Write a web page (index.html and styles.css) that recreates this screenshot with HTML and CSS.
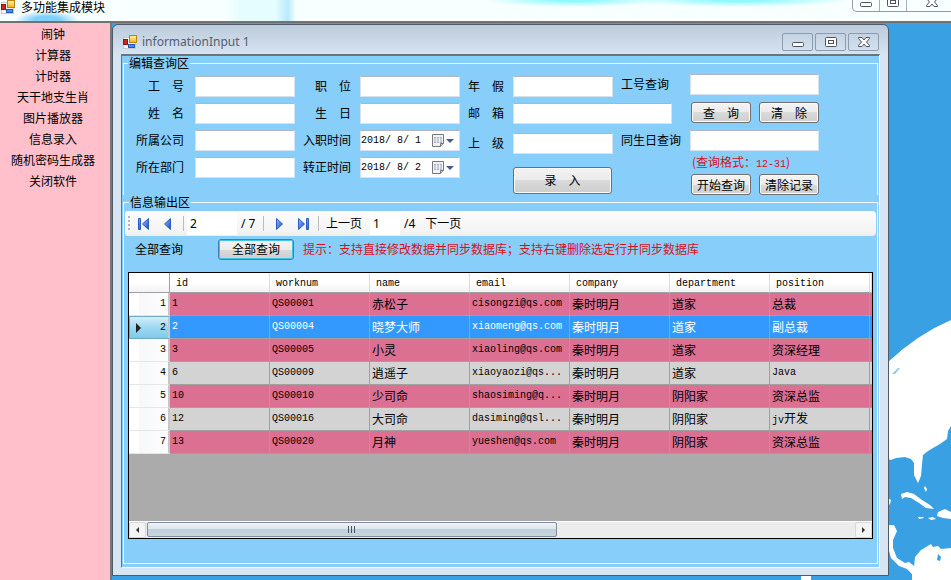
FILE: index.html
```html
<!DOCTYPE html>
<html lang="zh-CN">
<head>
<meta charset="utf-8">
<title>多功能集成模块</title>
<link rel="stylesheet" href="styles.css">
</head>
<body>
<svg class="defs" width="0" height="0" aria-hidden="true">
  <defs>
    <linearGradient id="gy" x1="0" y1="0" x2="0" y2="1"><stop offset="0" stop-color="#fff3a8"/><stop offset="1" stop-color="#f2b21c"/></linearGradient>
    <linearGradient id="gb" x1="0" y1="0" x2="1" y2="1"><stop offset="0" stop-color="#8fc0ff"/><stop offset="1" stop-color="#1a48b8"/></linearGradient>
    <symbol id="app" viewBox="0 0 14 14">
      <rect x="0.5" y="2.5" width="12" height="11" fill="#f4f4f4" stroke="#c8c8c8"/>
      <rect x="0.5" y="4.5" width="4" height="5" fill="#c8281e" stroke="#8e1710"/>
      <rect x="6.5" y="0.5" width="7" height="7" fill="url(#gy)" stroke="#b8860b"/>
      <rect x="5.5" y="9.5" width="6" height="3" fill="#4b8ae8" stroke="#2458b4"/>
    </symbol>
    <symbol id="min" viewBox="0 0 14 12"><rect x="1.5" y="6.5" width="11" height="4" rx="1" fill="#fff" stroke="#4b525c"/></symbol>
    <symbol id="max" viewBox="0 0 14 12"><rect x="1.5" y="1.5" width="11" height="9" rx="1" fill="#fff" stroke="#4b525c"/><rect x="4.5" y="4.5" width="5" height="3" fill="#fff" stroke="#4b525c"/></symbol>
    <symbol id="cls" viewBox="0 0 14 12"><path d="M1.500 1.500h3.500l2 2.500 2-2.500h3.500v1l-3 3.500 3 3.500v1H9L7 8l-2 2.500H1.500v-1l3-3.500-3-3.500z" fill="#fff" stroke="#4b525c"/></symbol>
    <symbol id="cal" viewBox="0 0 12 13"><path d="M0.5 0.5h11v9l-3 3h-8z" fill="#f2f2f2" stroke="#777"/><path d="M2 3h8v6H2z" fill="#a9b3c6"/><path d="M2 5h8M2 7h8M4.500 3v6M7.500 3v6" stroke="#fff" stroke-width=".7"/><path d="M8.500 12.500v-3h3" fill="#ccc" stroke="#777"/></symbol>
  </defs>
</svg>

<header class="titlebar">
  <svg class="app-icon" width="14" height="14"><use href="#app"/></svg>
  <h1>多功能集成模块</h1>
  <div class="main-controls">
    <button type="button" aria-label="最小化"><svg width="14" height="12"><use href="#min"/></svg></button>
    <button type="button" aria-label="最大化"><svg width="14" height="12"><use href="#max"/></svg></button>
    <button type="button" class="wide" aria-label="关闭"><svg width="14" height="12"><use href="#cls"/></svg></button>
  </div>
</header>

<div class="shell">
  <nav class="menu">
    <a href="#">闹钟</a>
    <a href="#">计算器</a>
    <a href="#">计时器</a>
    <a href="#">天干地支生肖</a>
    <a href="#">图片播放器</a>
    <a href="#">信息录入</a>
    <a href="#">随机密码生成器</a>
    <a href="#">关闭软件</a>
  </nav>

  <main class="desktop">
    <svg class="globe" viewBox="0 0 63 557" width="63" height="557" aria-hidden="true">
      <g transform="translate(0 190)">
        <path fill="#fff" d="M0 149Q30 121 63 107V213L60 218 59 226 52 231 45 235 40 238 35 242 34 251 33 263 30 270 26 262 26 250 23 246 17 244 8 245 3 247 0 246z"/>
        <path fill="#8fc8ef" d="M4 161l6-6 2 0-5 6z"/>
        <path fill="#fff" d="M13 281l6-2 7 2 8 6 8 5 4 4-8-1-7-5-8-5-6-1-3 2zM37 273l2 3-1 3-2-4zM30 304h5l1 1-5 1zM40 305l5-1 3 2-5 1zM50 299l7-3 6 3v7l-8-1-6-2zM0 285l3 2-1 4-2 2zM0 312l6 0 3 6-4 9 0 8 4 10 8 5 4-1 5 4 4 9V367H24l0-6-5-5-8-3-8-8-3-11z"/>
        <path fill="#fff" d="M26 354l1-10 6-7 10-6 2 3 5-1 3 3 10-1V367H26z"/>
        <path fill="#3aa0e4" d="M50 341l3 3-1 4-3-1z"/>
      </g>
    </svg>
    <i class="ice"></i>

    <section class="window">
      <header class="win-title">
        <svg class="app-icon" width="14" height="14"><use href="#app"/></svg>
        <h2>informationInput 1</h2>
        <div class="win-controls">
          <button type="button" aria-label="最小化"><svg width="14" height="12"><use href="#min"/></svg></button>
          <button type="button" aria-label="最大化"><svg width="14" height="12"><use href="#max"/></svg></button>
          <button type="button" aria-label="关闭"><svg width="14" height="12"><use href="#cls"/></svg></button>
        </div>
      </header>

      <div class="client">
        <fieldset class="group edit">
          <legend>编辑查询区</legend>
          <form class="form">
            <div class="col first">
              <label for="no">工　号</label><input id="no" type="text">
              <label for="nm">姓　名</label><input id="nm" type="text">
              <label for="co">所属公司</label><input id="co" type="text">
              <label for="dp">所在部门</label><input id="dp" type="text">
            </div>
            <div class="col second">
              <label for="ps">职　位</label><input id="ps" type="text">
              <label for="bd">生　日</label><input id="bd" type="text">
              <label for="d1">入职时间</label>
              <span class="date"><input id="d1" type="text" value="2018/ 8/ 1"><button type="button" aria-label="选择入职时间"><svg width="12" height="13"><use href="#cal"/></svg><i></i></button></span>
              <label for="d2">转正时间</label>
              <span class="date"><input id="d2" type="text" value="2018/ 8/ 2"><button type="button" aria-label="选择转正时间"><svg width="12" height="13"><use href="#cal"/></svg><i></i></button></span>
            </div>
            <div class="col third">
              <label for="hl">年　假</label><input id="hl" type="text">
              <label for="em">邮　箱</label><input id="em" class="long" type="text">
              <label for="up">上　级</label><input id="up" type="text">
              <button type="button" class="btn enter">录　入</button>
            </div>
            <div class="col query">
              <label for="q1">工号查询</label><input id="q1" type="text">
              <div class="pair"><button type="button" class="btn">查　询</button><button type="button" class="btn">清　除</button></div>
              <label for="q2">同生日查询</label><input id="q2" type="text">
              <p class="format">(查询格式：<span class="mono">12-31</span>)</p>
              <div class="pair"><button type="button" class="btn">开始查询</button><button type="button" class="btn">清除记录</button></div>
            </div>
          </form>
        </fieldset>

        <fieldset class="group output">
          <legend>信息输出区</legend>
          <div class="toolbar">
            <i class="grip"></i>
            <button type="button" aria-label="首条"><svg width="12" height="12" viewBox="0 0 12 12"><path d="M0.500 0.500h2v11h-2z" fill="url(#gb)" stroke="#2c5cc4"/><path d="M10.500 0.500v11L4.500 6z" fill="url(#gb)" stroke="#2c5cc4"/></svg></button>
            <button type="button" aria-label="上一条"><svg width="12" height="12" viewBox="0 0 12 12"><path d="M8.500 0.500v11L2.500 6z" fill="url(#gb)" stroke="#2c5cc4"/></svg></button>
            <i class="sep"></i>
            <input class="rec" type="text" value="2" aria-label="当前记录">
            <span class="total">/ 7</span>
            <i class="sep"></i>
            <button type="button" aria-label="下一条"><svg width="12" height="12" viewBox="0 0 12 12"><path d="M3.500 0.500v11l6-5.500z" fill="url(#gb)" stroke="#2c5cc4"/></svg></button>
            <button type="button" aria-label="末条"><svg width="12" height="12" viewBox="0 0 12 12"><path d="M9.500 0.500h2v11h-2z" fill="url(#gb)" stroke="#2c5cc4"/><path d="M1.500 0.500v11l6-5.500z" fill="url(#gb)" stroke="#2c5cc4"/></svg></button>
            <i class="sep"></i>
            <button type="button" class="page">上一页</button>
            <input class="pg" type="text" value="1" aria-label="当前页">
            <span class="pages">/4</span>
            <button type="button" class="page">下一页</button>
          </div>
          <div class="all">
            <span class="all-label">全部查询</span>
            <button type="button" class="btn focus">全部查询</button>
            <p>提示：支持直接修改数据并同步数据库；支持右键删除选定行并同步数据库</p>
          </div>
          <div class="grid">
            <table>
              <colgroup><col class="c-head"><col class="c"><col class="c"><col class="c"><col class="c"><col class="c"><col class="c"><col class="c"><col></colgroup>
              <thead><tr><th></th><th>id</th><th>worknum</th><th>name</th><th>email</th><th>company</th><th>department</th><th>position</th><th></th></tr></thead>
              <tbody>
                <tr><th>1</th><td class="mono">1</td><td class="mono">QS00001</td><td>赤松子</td><td class="mono">cisongzi@qs.com</td><td>秦时明月</td><td>道家</td><td>总裁</td><td></td></tr>
                <tr class="selected"><th>2</th><td class="mono">2</td><td class="mono">QS00004</td><td>晓梦大师</td><td class="mono">xiaomeng@qs.com</td><td>秦时明月</td><td>道家</td><td>副总裁</td><td></td></tr>
                <tr><th>3</th><td class="mono">3</td><td class="mono">QS00005</td><td>小灵</td><td class="mono">xiaoling@qs.com</td><td>秦时明月</td><td>道家</td><td>资深经理</td><td></td></tr>
                <tr><th>4</th><td class="mono">6</td><td class="mono">QS00009</td><td>逍遥子</td><td class="mono">xiaoyaozi@qs...</td><td>秦时明月</td><td>道家</td><td class="mono">Java</td><td></td></tr>
                <tr><th>5</th><td class="mono">10</td><td class="mono">QS00010</td><td>少司命</td><td class="mono">shaosiming@q...</td><td>秦时明月</td><td>阴阳家</td><td>资深总监</td><td></td></tr>
                <tr><th>6</th><td class="mono">12</td><td class="mono">QS00016</td><td>大司命</td><td class="mono">dasiming@qsl...</td><td>秦时明月</td><td>阴阳家</td><td><span class="mono">jv</span>开发</td><td></td></tr>
                <tr><th>7</th><td class="mono">13</td><td class="mono">QS00020</td><td>月神</td><td class="mono">yueshen@qs.com</td><td>秦时明月</td><td>阴阳家</td><td>资深总监</td><td></td></tr>
              </tbody>
            </table>
            <div class="scroll">
              <button type="button" class="arrow left" aria-label="向左滚动"></button>
              <div class="track"><div class="thumb"><i></i><i></i><i></i></div></div>
              <button type="button" class="arrow right" aria-label="向右滚动"></button>
            </div>
          </div>
        </fieldset>
      </div>
    </section>
  </main>
</div>
</body>
</html>
```
FILE: styles.css
```css
* { box-sizing: border-box; }

body {
  margin: 0;
  height: 100vh;
  display: flex;
  flex-direction: column;
  overflow: hidden;
  font: 12px/14px "Noto Sans CJK SC", sans-serif;
  color: #000;
}

h1, h2, p { margin: 0; font-size: 12px; font-weight: 400; }
button, input { font: inherit; color: inherit; }
button { padding: 0; margin: 0; border: 0; background: none; }
.defs { position: absolute; }
.mono { font-family: "Liberation Mono", monospace; font-size: 10px; }

/* Main title bar */
.titlebar {
  height: 23px;
  display: flex;
  align-items: flex-start;
  border-bottom: 2px solid #707274;
  background:
    radial-gradient(ellipse 32px 9px at 47px 20px, #7fd0fb 40%, transparent),
    radial-gradient(ellipse 90px 7px at 575px 0, #8ff8fc 20%, transparent),
    radial-gradient(ellipse 110px 7px at 740px 0, #8ff8fc 20%, transparent),
    linear-gradient(90deg, transparent 225px, #e6fdff 240px, #e6fdff 275px, #b8eafb 288px, transparent 296px),
    #f8ffff;
}
.titlebar .app-icon { margin: 0 6px 0 1px; }
.titlebar h1 { flex: 1; }
.main-controls {
  display: flex;
  width: 99px;
  height: 12px;
  border: 1px solid #929ba2;
  border-top: 0;
  border-right: 0;
  border-radius: 0 0 0 5px;
}
.main-controls button {
  width: 27px;
  height: 11px;
  display: flex;
  align-items: flex-end;
  justify-content: center;
  border-right: 1px solid #a8b0b6;
  overflow: hidden;
}
.main-controls svg { margin-bottom: 3px; flex: none; }
.main-controls .wide { flex: 1; border: 0; padding-left: 5px; }

.shell { flex: 1; display: flex; min-height: 0; }

.menu {
  width: 112px;
  padding-right: 4px;
  display: flex;
  flex-direction: column;
  background: #ffc0cb;
  border-right: 2px solid #77787c;
}
.menu a {
  line-height: 21px;
  text-align: center;
  color: #000;
  text-decoration: none;
  white-space: nowrap;
}

.desktop { position: relative; flex: 1; background: #3aa0e4; overflow: hidden; }
.globe { position: absolute; right: 0; top: 0; }
.ice { position: absolute; right: 140px; bottom: 0; width: 10px; height: 4px; background: #fff; }

/* Child window */
.window {
  position: absolute;
  inset: 1px 62px 4px 0;
  display: flex;
  flex-direction: column;
  padding: 0 8px 7px;
  border: 1px solid #4e5a68;
  border-radius: 6px 6px 0 0;
  background: linear-gradient(#bccbdb, #d7e4f2 30px, #d7e4f2);
}
.win-title { height: 29px; display: flex; align-items: center; flex: none; padding: 5px 0 0 2px; }
.win-title h2 { flex: 1; padding-left: 5px; font-family: "Noto Sans", sans-serif; color: #52606e; }
.win-controls { display: flex; gap: 2px; padding-right: 1px; }
.win-controls button {
  width: 31px;
  height: 18px;
  display: flex;
  align-items: center;
  justify-content: center;
  border: 1px solid #8c9bad;
  border-radius: 2px;
}
.client {
  flex: 1;
  display: flex;
  flex-direction: column;
  min-height: 0;
  padding: 0 1px 3px;
  background: #87cefa;
  border: 1px solid #fff;
  border-top: 2px solid #6b737c;
  border-left-color: #6b737c;
}

.group {
  margin: 0;
  padding: 0;
  min-width: 0;
  border: 1px solid #f4fbff;
}
.group legend { margin-left: 4px; padding: 0 1px; line-height: 14px; }
.edit { border-bottom: 0; }
.output { flex: 1; display: flex; flex-direction: column; padding: 2px 1px 24px; min-height: 0; }

/* Edit form */
.form { display: flex; gap: 8px; align-items: flex-start; padding: 4px 0 0 12px; }
.col { display: grid; grid-auto-rows: 21px; row-gap: 6px; column-gap: 9px; align-items: center; margin-top: 2px; }
.col label { white-space: nowrap; line-height: 16px; padding-bottom: 2px; }
.col input {
  width: 100%;
  height: 21px;
  padding: 0 2px;
  background: #fff;
  border: 1px solid #d5e3ee;
  border-top-color: #abb8c4;
}
.first { grid-template-columns: 48px 100px; column-gap: 11px; }
.second { grid-template-columns: 48px 100px; }
.first label, .second label { text-align: right; }
.third { grid-template-columns: 36px 100px; grid-template-rows: 21px 21px 27px 26px; }
.third input.long { width: 159px; }
.third .enter { grid-column: 2; width: 99px; height: 27px; margin-top: 8px; }
.query { grid-template-columns: 60px 129px; row-gap: 7px; grid-template-rows: 21px 21px 21px 9px 21px; margin-top: 0; }
.pair, .format { grid-column: 2; }
.pair { display: flex; gap: 8px; padding-left: 1px; }
.pair .btn { flex: 1; }
.format { color: #d8101c; line-height: 9px; white-space: nowrap; padding-left: 2px; }

.col .date { display: flex; height: 21px; background: #fff; border: 1px solid #d5e3ee; border-top-color: #abb8c4; }
.col .date input { flex: 1; min-width: 0; height: 19px; padding: 0; border: 0; font: 10px "Liberation Mono", monospace; }
.date button { width: 27px; display: flex; align-items: center; gap: 2px; }
.date i { border: 4px solid transparent; border-top-color: #445c86; border-bottom: 0; }

.btn {
  height: 21px;
  line-height: 16px;
  border: 1px solid #707070;
  border-radius: 3px;
  background: linear-gradient(#f3f3f3, #ebebeb 50%, #dadada 50%, #cecece);
  box-shadow: inset 0 0 0 1px #fafafa;
  white-space: nowrap;
}
.btn.focus { width: 76px; border-color: #3c7fb1; box-shadow: inset 0 0 0 1px #3fc4ee; }

/* Record navigator */
.toolbar {
  height: 25px;
  flex: none;
  display: flex;
  align-items: center;
  padding-left: 3px;
  border-radius: 2px 4px 4px 2px;
  background: linear-gradient(#fdfdfd, #f4f4f4 80%, #ececec);
  font-family: "Noto Sans", "Noto Sans CJK SC", sans-serif;
}
.grip { width: 2px; height: 15px; margin-right: 2px; background: repeating-linear-gradient(#b4b4b4 0 2px, transparent 2px 4px); }
.toolbar button { min-width: 24px; height: 22px; }
.toolbar button:not(.page) { display: flex; align-items: center; justify-content: center; }
.sep { width: 1px; height: 15px; margin: 0 3px; background: #bdbdbd; }
.toolbar input { height: 23px; padding: 0 3px; border: 0; background: #fff; }
.rec { width: 50px; }
.toolbar .pg { width: 30px; margin-left: 8px; }
.total { width: 23px; padding-left: 4px; white-space: nowrap; }
.pages { padding: 0 8px 0 4px; }
.toolbar .page { margin-left: 2px; }
.sep + .page { margin-left: 4px; }

.all { display: flex; align-items: center; height: 26px; flex: none; margin-bottom: 10px; padding-left: 10px; }
.all-label { width: 83px; }
.all p { margin-left: 9px; color: #d8101c; white-space: nowrap; }

/* Data grid */
.grid {
  flex: 1;
  min-height: 0;
  display: flex;
  flex-direction: column;
  justify-content: space-between;
  margin: 0 3px;
  border: 1px solid #000;
  background: #ababab;
  overflow: hidden;
}
table { width: 100%; table-layout: fixed; border-collapse: separate; border-spacing: 0; }
.c-head { width: 41px; }
.c { width: 100px; }
th, td { padding: 0; font-weight: 400; text-align: left; white-space: nowrap; overflow: hidden; }
thead th {
  height: 20px;
  padding: 2px 0 0 6px;
  font: 10px/12px "Liberation Mono", monospace;
  background: linear-gradient(#fff, #fff 50%, #f1f2f4);
  border-right: 1px solid #dadcdf;
  border-bottom: 1px solid #a0a0a0;
}
thead th:first-child { border-right-color: #a0a0a0; }
tbody th {
  height: 23px;
  padding-right: 2px;
  text-align: right;
  font: 10px/12px "Liberation Mono", monospace;
  background: linear-gradient(90deg, #fff 25%, #f7f8fa 25%, #fdfdfd);
  border-right: 2px solid #c4c6c8;
  border-bottom: 1px solid #e4e6e8;
}
tbody td {
  height: 23px;
  padding-left: 2px;
  background: #db7093;
  border-right: 1px solid #a0a0a0;
  border-bottom: 1px solid #a0a0a0;
}
tbody tr:nth-child(even) td { background: #d3d3d3; }
tbody tr.selected td { background: #39f; color: #fff; }
tbody td:last-child { border-right: 0; }
tbody .selected th {
  background: linear-gradient(#d5eefa, #9fd8f1 50%, #7fcaea);
  border: 1px solid #6fa9c4;
  border-right: 2px solid #c4c6c8;
}
.selected th::before {
  content: "";
  float: left;
  margin: 1px 0 0 6px;
  border: 5px solid transparent;
  border-left-color: #222;
  border-right: 0;
}

/* Horizontal scroll bar */
.scroll { height: 17px; flex: none; display: flex; background: #ececec; border-top: 1px solid #fff; }
.arrow { width: 17px; display: flex; align-items: center; justify-content: center; border: 1px solid #d8d8d8; border-radius: 2px; background: #f4f4f4; }
.arrow::before { content: ""; border: 3px solid transparent; }
.left::before { border-right-color: #333; border-left: 0; }
.right::before { border-left-color: #333; border-right: 0; }
.track { flex: 1; padding: 0 1px; }
.thumb {
  width: 58%;
  height: 15px;
  display: flex;
  align-items: center;
  justify-content: center;
  gap: 1px;
  border: 1px solid #7e8c9c;
  border-radius: 2px;
  background: linear-gradient(#eef3f7, #dde6ec 45%, #bfcfd8 50%, #c8d6de);
}
.thumb i { width: 2px; height: 7px; border-left: 1px solid #44566a; }
```
